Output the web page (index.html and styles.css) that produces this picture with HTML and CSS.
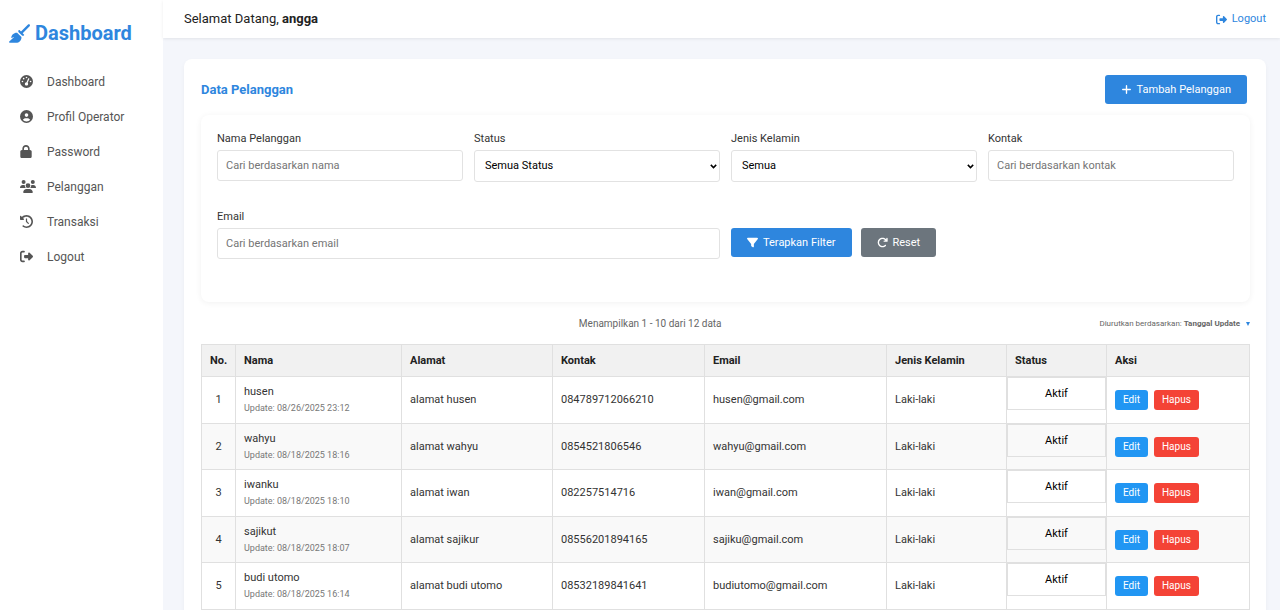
FILE: index.html
```html
<!DOCTYPE html>
<html lang="id">
<head>
<meta charset="utf-8">
<title>Data Pelanggan</title>
<link rel="stylesheet" href="styles.css">
</head>
<body>
<svg class="sprite" aria-hidden="true">
  <symbol id="broom" viewBox="0 0 576 512"><path d="M566.6 54.6c12.5-12.5 12.5-32.8 0-45.3s-32.8-12.5-45.3 0l-192 192-34.7-34.7c-4.2-4.2-10-6.6-16-6.6c-12.5 0-22.6 10.1-22.6 22.6v29.1L364.3 320h29.1c12.5 0 22.6-10.1 22.6-22.6c0-6-2.4-11.8-6.6-16l-34.7-34.7 192-192zM341.1 353.4L222.6 234.9c-42.7-3.7-85.2 11.7-115.8 42.3l-8 8C76.5 307.5 64 337.7 64 369.2c0 6.8 7.1 11.2 13.2 8.2l51.1-25.5c5-2.5 9.5 4.1 5.4 7.9L7.3 473.4C2.7 477.6 0 483.6 0 489.9C0 502.1 9.900 512 22.100 512l173.300 0c38.800 0 75.900-15.400 103.400-42.800c30.600-30.600 45.900-73.100 42.300-115.800z"/></symbol>
  <symbol id="gauge" viewBox="0 0 512 512"><path d="M0 256a256 256 0 1 1 512 0A256 256 0 1 1 0 256zM288 96a32 32 0 1 0 -64 0 32 32 0 1 0 64 0zM256 416c35.3 0 64-28.7 64-64c0-17.4-6.9-33.1-18.1-44.6L366 161.7c5.3-12.1-.2-26.3-12.3-31.6s-26.3 .2-31.6 12.3L257.9 288c-.6 0-1.3 0-1.9 0c-35.3 0-64 28.7-64 64s28.7 64 64 64zM176 144a32 32 0 1 0 -64 0 32 32 0 1 0 64 0zM96 288a32 32 0 1 0 0-64 32 32 0 1 0 0 64zm352-32a32 32 0 1 0 -64 0 32 32 0 1 0 64 0z"/></symbol>
  <symbol id="user" viewBox="0 0 512 512"><path d="M399 384.2C376.9 345.8 335.4 320 288 320H224c-47.4 0-88.9 25.8-111 64.2c35.2 39.2 86.2 63.8 143 63.8s107.8-24.7 143-63.8zM0 256a256 256 0 1 1 512 0A256 256 0 1 1 0 256zm256 16a72 72 0 1 0 0-144 72 72 0 1 0 0 144z"/></symbol>
  <symbol id="lock" viewBox="0 0 448 512"><path d="M144 144v48H304V144c0-44.2-35.8-80-80-80s-80 35.8-80 80zM80 192V144C80 64.5 144.5 0 224 0s144 64.5 144 144v48h16c35.3 0 64 28.7 64 64V448c0 35.3-28.7 64-64 64H64c-35.3 0-64-28.7-64-64V256c0-35.3 28.7-64 64-64H80z"/></symbol>
  <symbol id="users" viewBox="0 0 640 512"><path d="M144 0a80 80 0 1 1 0 160A80 80 0 1 1 144 0zM512 0a80 80 0 1 1 0 160A80 80 0 1 1 512 0zM0 298.7C0 239.8 47.8 192 106.7 192h42.7c15.9 0 31 3.5 44.6 9.7c-1.3 7.2-1.9 14.7-1.9 22.3c0 38.2 16.8 72.5 43.3 96c-.2 0-.4 0-.7 0H21.3C9.6 320 0 310.4 0 298.7zM405.3 320c-.2 0-.4 0-.7 0c26.6-23.5 43.3-57.8 43.3-96c0-7.6-.7-15-1.9-22.3c13.6-6.3 28.7-9.7 44.6-9.7h42.7C592.2 192 640 239.8 640 298.7c0 11.8-9.6 21.3-21.3 21.3H405.3zM224 224a96 96 0 1 1 192 0 96 96 0 1 1 -192 0zM128 485.3C128 411.7 187.7 352 261.3 352H378.7C452.3 352 512 411.7 512 485.3c0 14.7-11.9 26.7-26.7 26.7H154.7c-14.7 0-26.7-11.9-26.7-26.7z"/></symbol>
  <symbol id="history" viewBox="0 0 512 512"><path d="M75 75L41 41C25.9 25.9 0 36.6 0 57.9V168c0 13.3 10.7 24 24 24H134.1c21.4 0 32.1-25.9 17-41l-30.8-30.8C155 85.5 203 64 256 64c106 0 192 86 192 192s-86 192-192 192c-40.8 0-78.6-12.7-109.7-34.4c-14.5-10.1-34.4-6.6-44.6 7.9s-6.6 34.4 7.9 44.6C151.2 495 201.7 512 256 512c141.4 0 256-114.6 256-256S397.4 0 256 0C185.3 0 121.3 28.7 75 75zm181 53c-13.3 0-24 10.7-24 24V256c0 6.4 2.5 12.5 7 17l72 72c9.4 9.4 24.6 9.4 33.9 0s9.4-24.6 0-33.9l-65-65V152c0-13.3-10.7-24-24-24z"/></symbol>
  <symbol id="exit" viewBox="0 0 512 512"><path d="M377.9 105.9L500.7 228.7c7.2 7.2 11.3 17.1 11.3 27.3s-4.1 20.1-11.3 27.3L377.9 406.1c-6.4 6.4-15 9.9-24 9.9c-18.7 0-33.9-15.2-33.9-33.9l0-62.1-128 0c-17.7 0-32-14.3-32-32l0-64c0-17.7 14.3-32 32-32l128 0 0-62.1c0-18.7 15.2-33.9 33.9-33.9c9 0 17.6 3.6 24 9.9zM160 96L96 96c-17.7 0-32 14.3-32 32l0 256c0 17.7 14.3 32 32 32l64 0c17.7 0 32 14.3 32 32s-14.3 32-32 32l-64 0c-53 0-96-43-96-96L0 128C0 75 43 32 96 32l64 0c17.7 0 32 14.3 32 32s-14.3 32-32 32z"/></symbol>
  <symbol id="plus" viewBox="0 0 448 512"><path d="M256 80c0-17.700-14.300-32-32-32s-32 14.300-32 32v144H48c-17.700 0-32 14.300-32 32s14.300 32 32 32h144v144c0 17.700 14.300 32 32 32s32-14.300 32-32V288h144c17.700 0 32-14.300 32-32s-14.300-32-32-32H256V80z"/></symbol>
  <symbol id="filter" viewBox="0 0 512 512"><path d="M3.9 54.9C10.5 40.9 24.5 32 40 32H472c15.500 0 29.500 8.900 36.100 22.900s4.600 30.500-5.200 42.500L320 320.900V448c0 12.100-6.800 23.200-17.700 28.600s-23.800 4.300-33.500-3l-64-48c-8.100-6-12.800-15.500-12.800-25.600V320.900L9 97.300C-.7 85.400-2.800 68.800 3.900 54.900z"/></symbol>
  <symbol id="redo" viewBox="0 0 512 512"><path d="M386.3 160H336c-17.700 0-32 14.300-32 32s14.300 32 32 32H464c17.700 0 32-14.300 32-32V64c0-17.700-14.300-32-32-32s-32 14.300-32 32v51.200L414.400 97.600c-87.500-87.500-229.300-87.500-316.800 0s-87.500 229.300 0 316.800s229.300 87.500 316.800 0c12.500-12.500 12.500-32.800 0-45.300s-32.800-12.500-45.300 0c-62.500 62.500-163.800 62.500-226.300 0s-62.500-163.800 0-226.300s163.800-62.500 226.300 0L386.300 160z"/></symbol>
</svg>

<div class="layout">
  <aside class="sidebar">
    <div class="brand"><svg class="brand-icon"><use href="#broom"/></svg>Dashboard</div>
    <nav class="menu">
      <a class="menu-link" href="#"><span class="menu-icon"><svg class="icon"><use href="#gauge"/></svg></span>Dashboard</a>
      <a class="menu-link" href="#"><span class="menu-icon"><svg class="icon"><use href="#user"/></svg></span>Profil Operator</a>
      <a class="menu-link" href="#"><span class="menu-icon"><svg class="icon icon-narrow"><use href="#lock"/></svg></span>Password</a>
      <a class="menu-link" href="#"><span class="menu-icon"><svg class="icon icon-wide"><use href="#users"/></svg></span>Pelanggan</a>
      <a class="menu-link" href="#"><span class="menu-icon"><svg class="icon"><use href="#history"/></svg></span>Transaksi</a>
      <a class="menu-link" href="#"><span class="menu-icon"><svg class="icon"><use href="#exit"/></svg></span>Logout</a>
    </nav>
  </aside>

  <div class="page">
    <header class="topbar">
      <div class="welcome">Selamat Datang, <strong>angga</strong></div>
      <a class="logout" href="#"><svg class="icon-small"><use href="#exit"/></svg>Logout</a>
    </header>

    <main class="card">
      <div class="card-head">
        <h1 class="title">Data Pelanggan</h1>
        <button class="btn btn-primary" type="button"><svg class="icon-small"><use href="#plus"/></svg>Tambah Pelanggan</button>
      </div>

      <form class="filters">
        <div class="field"><label for="nama">Nama Pelanggan</label><input class="control" id="nama" type="text" placeholder="Cari berdasarkan nama"></div>
        <div class="field"><label for="status">Status</label><select class="control control-select" id="status"><option>Semua Status</option></select></div>
        <div class="field"><label for="jk">Jenis Kelamin</label><select class="control control-select" id="jk"><option>Semua</option></select></div>
        <div class="field"><label for="kontak">Kontak</label><input class="control" id="kontak" type="text" placeholder="Cari berdasarkan kontak"></div>
        <div class="field field-wide"><label for="email">Email</label><input class="control" id="email" type="text" placeholder="Cari berdasarkan email"></div>
        <div class="actions">
          <button class="btn btn-primary" type="button"><svg class="icon-small"><use href="#filter"/></svg>Terapkan Filter</button>
          <button class="btn btn-muted" type="button"><svg class="icon-small"><use href="#redo"/></svg>Reset</button>
        </div>
      </form>

      <div class="summary">
        <span></span>
        <span class="count">Menampilkan 1 - 10 dari 12 data</span>
        <span class="sort">Diurutkan berdasarkan: <strong>Tanggal Update</strong><span class="caret"></span></span>
      </div>

      <table class="table">
        <colgroup><col class="c-no"><col class="c-nama"><col class="c-alamat"><col class="c-kontak"><col class="c-email"><col class="c-jk"><col class="c-status"><col class="c-aksi"></colgroup>
        <thead>
          <tr><th class="center">No.</th><th>Nama</th><th>Alamat</th><th>Kontak</th><th>Email</th><th>Jenis Kelamin</th><th>Status</th><th>Aksi</th></tr>
        </thead>
        <tbody>
          <tr><td class="center">1</td><td>husen<small class="updated">Update: 08/26/2025 23:12</small></td><td>alamat husen</td><td>084789712066210</td><td>husen@gmail.com</td><td>Laki-laki</td><td class="status-cell"><div class="status">Aktif</div></td><td><div class="row-actions"><button class="mini edit" type="button">Edit</button><button class="mini delete" type="button">Hapus</button></div></td></tr>
          <tr><td class="center">2</td><td>wahyu<small class="updated">Update: 08/18/2025 18:16</small></td><td>alamat wahyu</td><td>0854521806546</td><td>wahyu@gmail.com</td><td>Laki-laki</td><td class="status-cell"><div class="status">Aktif</div></td><td><div class="row-actions"><button class="mini edit" type="button">Edit</button><button class="mini delete" type="button">Hapus</button></div></td></tr>
          <tr><td class="center">3</td><td>iwanku<small class="updated">Update: 08/18/2025 18:10</small></td><td>alamat iwan</td><td>082257514716</td><td>iwan@gmail.com</td><td>Laki-laki</td><td class="status-cell"><div class="status">Aktif</div></td><td><div class="row-actions"><button class="mini edit" type="button">Edit</button><button class="mini delete" type="button">Hapus</button></div></td></tr>
          <tr><td class="center">4</td><td>sajikut<small class="updated">Update: 08/18/2025 18:07</small></td><td>alamat sajikur</td><td>08556201894165</td><td>sajiku@gmail.com</td><td>Laki-laki</td><td class="status-cell"><div class="status">Aktif</div></td><td><div class="row-actions"><button class="mini edit" type="button">Edit</button><button class="mini delete" type="button">Hapus</button></div></td></tr>
          <tr><td class="center">5</td><td>budi utomo<small class="updated">Update: 08/18/2025 16:14</small></td><td>alamat budi utomo</td><td>08532189841641</td><td>budiutomo@gmail.com</td><td>Laki-laki</td><td class="status-cell"><div class="status">Aktif</div></td><td><div class="row-actions"><button class="mini edit" type="button">Edit</button><button class="mini delete" type="button">Hapus</button></div></td></tr>
        </tbody>
      </table>
    </main>
  </div>
</div>
</body>
</html>
```
FILE: styles.css
```css
* { box-sizing: border-box; }
body {
  margin: 0;
  background: #f4f6fb;
  color: #333;
  font-family: Roboto, "Liberation Sans", sans-serif;
  font-size: 11px;
  line-height: 16px;
}
button, input, select { font: inherit; }
svg { fill: currentColor; flex: none; }
.sprite { display: none; }

.layout { display: flex; min-height: 100vh; }
.sidebar { flex: none; width: 163px; background: #fff; }
.brand {
  display: flex;
  align-items: center;
  gap: 5px;
  padding: 20px 9px 0;
  color: #2e86de;
  font-size: 20px;
  font-weight: 700;
  line-height: 26px;
}
.brand-icon { width: 21px; height: 19px; }
.menu { display: flex; flex-direction: column; padding: 18px 20px; }
.menu-link {
  display: flex;
  align-items: center;
  height: 35px;
  color: #555;
  font-size: 12px;
  text-decoration: none;
}
.menu-icon { display: flex; width: 27px; }
.icon { width: 13px; height: 13px; }
.icon-narrow { width: 12px; }
.icon-wide { width: 16px; }
.icon-small { width: 11px; height: 11px; }

.page { flex: 1; min-width: 0; }
.topbar {
  display: flex;
  justify-content: space-between;
  align-items: center;
  height: 38px;
  padding: 0 14px 0 21px;
  background: #fff;
  box-shadow: 0 1px 3px rgba(0, 0, 0, 0.08);
}
.welcome { font-size: 13px; color: #222; }
.logout {
  display: flex;
  align-items: center;
  gap: 5px;
  color: #2e86de;
  text-decoration: none;
}

.card {
  margin: 21px 14px 0 21px;
  padding: 16px 16px 24px 17px;
  background: #fff;
  border-radius: 8px;
  box-shadow: 0 2px 5px rgba(0, 0, 0, 0.04);
}
.card-head {
  display: flex;
  justify-content: space-between;
  align-items: center;
  padding-right: 3px;
  margin-bottom: 11px;
}
.title { margin: 0; color: #2e86de; font-size: 13px; font-weight: 700; }
.btn {
  display: flex;
  align-items: center;
  gap: 5px;
  height: 29px;
  padding: 0 16px;
  border: 0;
  border-radius: 3px;
  color: #fff;
}
.btn-primary { background: #2e86de; }
.btn-muted { background: #6c757d; }

.filters {
  display: grid;
  grid-template-columns: repeat(4, 1fr);
  column-gap: 11px;
  row-gap: 27px;
  padding: 16px 16px 43px;
  border-radius: 8px;
  box-shadow: 0 1px 6px rgba(0, 0, 0, 0.06);
}
.field { display: flex; flex-direction: column; gap: 3px; }
.field-wide { grid-column: span 2; }
.control {
  width: 100%;
  height: 31px;
  padding: 0 8px;
  border: 1px solid #e2e2e2;
  border-radius: 3px;
  background: #fff;
  color: #000;
}
.control::placeholder { color: #757575; }
.control-select {
  height: 32px;
  padding: 0 16px 0 10px;
  appearance: none;
  background: #fff url("data:image/svg+xml,%3Csvg xmlns='http://www.w3.org/2000/svg' viewBox='0 0 7 5'%3E%3Cpath d='M.8.9l2.700 2.700L6.200.9' fill='none' stroke='%23000' stroke-width='1.500'/%3E%3C/svg%3E") no-repeat right 2px center / 7px 5px;
}
.actions { display: flex; gap: 9px; padding-top: 19px; }

.summary {
  display: flex;
  justify-content: space-between;
  padding: 13px 0 11px;
  color: #666;
  font-size: 10px;
  line-height: 18px;
}
.sort {
  display: flex;
  align-items: center;
  gap: 2px;
  font-size: 8px;
  line-height: 16px;
}
.caret {
  margin-left: 4px;
  border: 2px solid transparent;
  border-top: 4px solid #2e86de;
  border-bottom: 0;
}

.table { width: 100%; border-collapse: collapse; table-layout: fixed; }
.c-no { width: 34px; }
.c-nama { width: 166px; }
.c-alamat { width: 151px; }
.c-kontak { width: 152px; }
.c-email { width: 182px; }
.c-jk { width: 120px; }
.c-status { width: 100px; }
.table th, .table td { padding: 0 8px; border: 1px solid #e0e0e0; text-align: left; }
.table th { height: 32px; background: #f1f1f1; color: #222; font-weight: 700; }
.table td { height: 47px; }
.table tbody tr:nth-child(even) { background: #f9f9f9; }
.table tbody tr:nth-child(even) td { height: 46px; }
.table .center { padding: 0; text-align: center; }
.updated { display: block; color: #777; font-size: 9px; }
.table .status-cell { padding: 0; vertical-align: top; }
.status {
  height: 33px;
  border: 1px solid #e0e0e0;
  color: #000;
  line-height: 31px;
  text-align: center;
}
.row-actions { display: flex; gap: 6px; }
.mini {
  height: 20px;
  padding: 0 8px;
  border: 0;
  border-radius: 3px;
  color: #fff;
  font-size: 10px;
}
.edit { background: #2196f3; }
.delete { background: #f44336; }
```
